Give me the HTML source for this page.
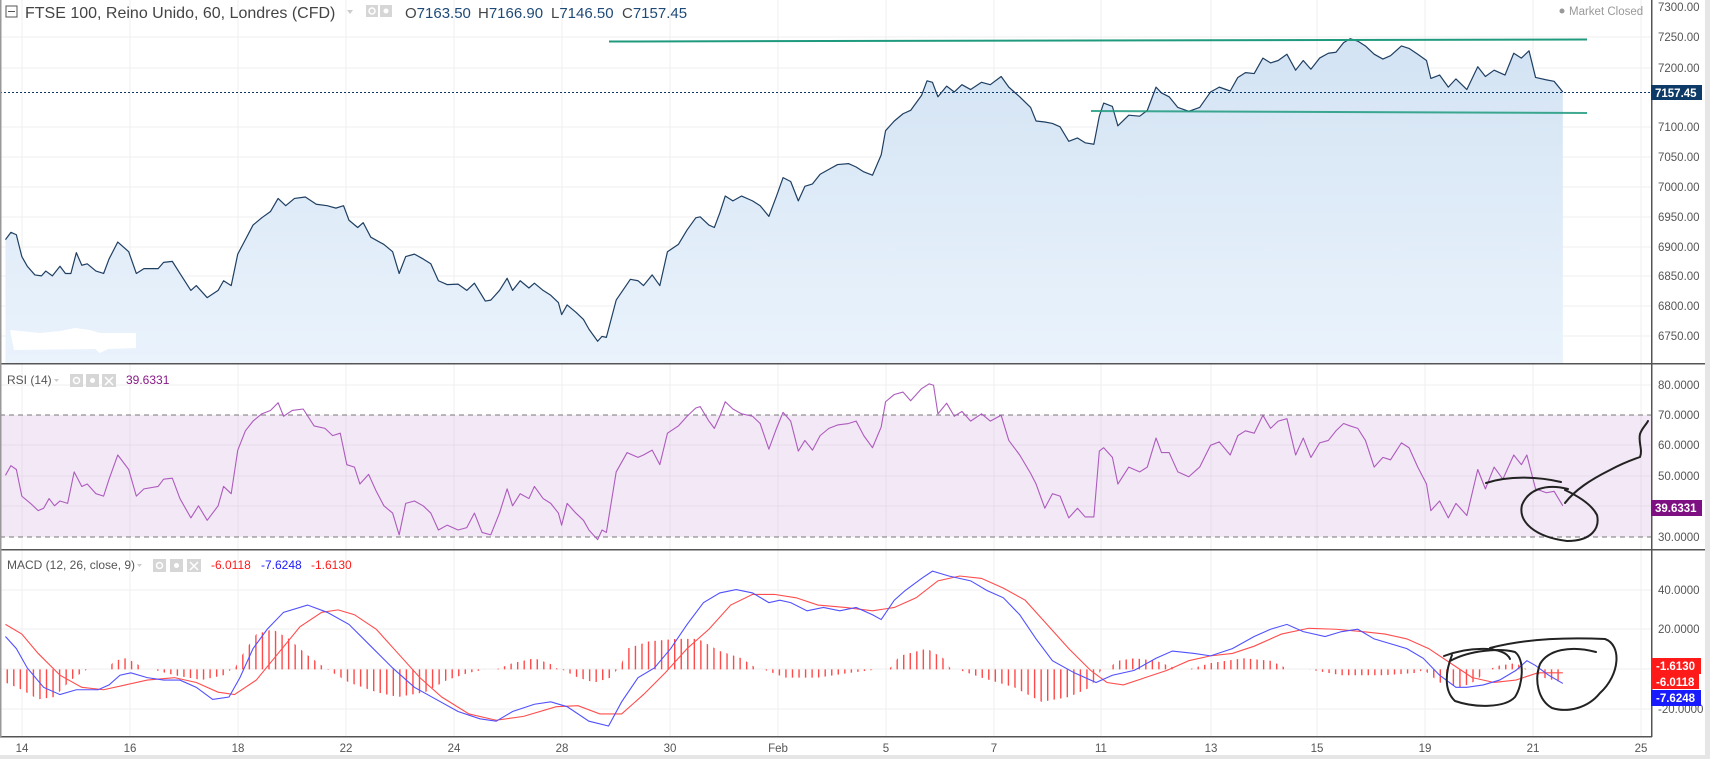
<!DOCTYPE html>
<html><head><meta charset="utf-8"><style>
html,body{margin:0;padding:0;background:#fff;}
svg{display:block;font-family:"Liberation Sans",sans-serif;}
</style></head><body>
<svg width="1710" height="759" viewBox="0 0 1710 759" xmlns="http://www.w3.org/2000/svg">
<defs>
<linearGradient id="pf" x1="0" y1="0" x2="0" y2="1"><stop offset="0" stop-color="#d3e3f3"/><stop offset="1" stop-color="#eaf3fc"/></linearGradient>
<pattern id="hist" patternUnits="userSpaceOnUse" width="6" height="10"><rect x="0" y="0" width="1.3" height="10" fill="#ff4a4a"/></pattern>
</defs>
<rect width="1710" height="759" fill="#fff"/>
<g stroke="#efefef" stroke-width="1">
<line x1="0" y1="37" x2="1652" y2="37"/><line x1="0" y1="68" x2="1652" y2="68"/><line x1="0" y1="127" x2="1652" y2="127"/><line x1="0" y1="157" x2="1652" y2="157"/><line x1="0" y1="187" x2="1652" y2="187"/><line x1="0" y1="217" x2="1652" y2="217"/><line x1="0" y1="247" x2="1652" y2="247"/><line x1="0" y1="276" x2="1652" y2="276"/><line x1="0" y1="306" x2="1652" y2="306"/><line x1="0" y1="336" x2="1652" y2="336"/>
<line x1="0" y1="385" x2="1652" y2="385"/><line x1="0" y1="445" x2="1652" y2="445"/><line x1="0" y1="476" x2="1652" y2="476"/><line x1="0" y1="506" x2="1652" y2="506"/>
<line x1="0" y1="590" x2="1652" y2="590"/><line x1="0" y1="629" x2="1652" y2="629"/><line x1="0" y1="669" x2="1652" y2="669"/><line x1="0" y1="709" x2="1652" y2="709"/>
<line x1="22" y1="0" x2="22" y2="737"/><line x1="130" y1="0" x2="130" y2="737"/><line x1="238" y1="0" x2="238" y2="737"/><line x1="346" y1="0" x2="346" y2="737"/><line x1="454" y1="0" x2="454" y2="737"/><line x1="562" y1="0" x2="562" y2="737"/><line x1="670" y1="0" x2="670" y2="737"/><line x1="778" y1="0" x2="778" y2="737"/><line x1="886" y1="0" x2="886" y2="737"/><line x1="994" y1="0" x2="994" y2="737"/><line x1="1101" y1="0" x2="1101" y2="737"/><line x1="1211" y1="0" x2="1211" y2="737"/><line x1="1317" y1="0" x2="1317" y2="737"/><line x1="1425" y1="0" x2="1425" y2="737"/><line x1="1533" y1="0" x2="1533" y2="737"/><line x1="1641" y1="0" x2="1641" y2="737"/>
</g>
<rect x="0" y="415" width="1652" height="122" fill="#bf7fcf" fill-opacity="0.18"/>
<line x1="0" y1="415" x2="1652" y2="415" stroke="#777" stroke-dasharray="5,4"/>
<line x1="0" y1="537" x2="1652" y2="537" stroke="#777" stroke-dasharray="5,4"/>

<g transform="scale(1.0906 0.48403)">
<path fill="url(#pf)" d="M5,752 L5,495 L10,480 L15,485 L20,530 L25,550 L32,568 L38,570 L42,560 L48,570 L55,550 L60,565 L65,565 L70,522 L75,548 L80,545 L88,560 L95,565 L100,535 L108,500 L118,520 L125,565 L132,555 L145,555 L150,542 L158,540 L165,565 L175,600 L180,590 L190,615 L200,600 L205,580 L212,590 L218,525 L225,495 L232,465 L240,450 L248,437 L255,410 L262,425 L270,410 L280,407 L290,422 L300,425 L308,430 L315,425 L320,455 L328,470 L333,460 L340,490 L352,505 L360,520 L366,565 L372,530 L380,525 L388,535 L395,545 L402,580 L410,588 L420,587 L428,600 L435,585 L445,622 L450,620 L458,600 L465,575 L470,600 L477,580 L485,595 L490,585 L498,600 L505,610 L512,625 L515,650 L520,630 L528,645 L535,660 L540,680 L548,705 L552,695 L556,697 L565,620 L578,577 L585,580 L590,590 L598,568 L605,590 L612,520 L622,505 L630,475 L638,450 L642,448 L650,465 L655,470 L660,440 L665,405 L672,415 L680,405 L690,415 L697,425 L705,447 L712,405 L718,367 L725,375 L732,415 L738,385 L745,380 L752,360 L760,350 L768,340 L778,338 L785,345 L792,355 L800,362 L808,320 L812,270 L820,250 L828,235 L835,228 L845,197 L850,167 L855,170 L860,200 L868,178 L875,190 L882,175 L890,185 L900,170 L908,175 L918,158 L925,180 L935,200 L945,222 L950,250 L958,252 L965,255 L972,262 L980,292 L988,285 L995,295 L1003,298 L1008,240 L1012,213 L1020,220 L1025,260 L1035,238 L1045,240 L1052,228 L1060,180 L1065,192 L1072,200 L1080,222 L1090,230 L1100,222 L1110,190 L1118,180 L1128,188 L1135,160 L1142,150 L1150,152 L1158,120 L1165,130 L1172,125 L1180,112 L1188,145 L1195,125 L1202,143 L1210,120 L1218,110 L1225,108 L1232,88 L1238,80 L1245,85 L1252,95 L1260,112 L1268,122 L1275,115 L1285,95 L1292,100 L1300,112 L1308,125 L1312,162 L1320,155 L1328,180 L1335,163 L1345,185 L1355,138 L1362,158 L1370,145 L1380,155 L1388,110 L1395,120 L1402,105 L1408,160 L1418,165 L1425,168 L1433,190 L1433,752 Z"/>
<path fill="none" stroke="#1f3f62" stroke-width="1.2" vector-effect="non-scaling-stroke" stroke-linejoin="round" d="M5,495 L10,480 L15,485 L20,530 L25,550 L32,568 L38,570 L42,560 L48,570 L55,550 L60,565 L65,565 L70,522 L75,548 L80,545 L88,560 L95,565 L100,535 L108,500 L118,520 L125,565 L132,555 L145,555 L150,542 L158,540 L165,565 L175,600 L180,590 L190,615 L200,600 L205,580 L212,590 L218,525 L225,495 L232,465 L240,450 L248,437 L255,410 L262,425 L270,410 L280,407 L290,422 L300,425 L308,430 L315,425 L320,455 L328,470 L333,460 L340,490 L352,505 L360,520 L366,565 L372,530 L380,525 L388,535 L395,545 L402,580 L410,588 L420,587 L428,600 L435,585 L445,622 L450,620 L458,600 L465,575 L470,600 L477,580 L485,595 L490,585 L498,600 L505,610 L512,625 L515,650 L520,630 L528,645 L535,660 L540,680 L548,705 L552,695 L556,697 L565,620 L578,577 L585,580 L590,590 L598,568 L605,590 L612,520 L622,505 L630,475 L638,450 L642,448 L650,465 L655,470 L660,440 L665,405 L672,415 L680,405 L690,415 L697,425 L705,447 L712,405 L718,367 L725,375 L732,415 L738,385 L745,380 L752,360 L760,350 L768,340 L778,338 L785,345 L792,355 L800,362 L808,320 L812,270 L820,250 L828,235 L835,228 L845,197 L850,167 L855,170 L860,200 L868,178 L875,190 L882,175 L890,185 L900,170 L908,175 L918,158 L925,180 L935,200 L945,222 L950,250 L958,252 L965,255 L972,262 L980,292 L988,285 L995,295 L1003,298 L1008,240 L1012,213 L1020,220 L1025,260 L1035,238 L1045,240 L1052,228 L1060,180 L1065,192 L1072,200 L1080,222 L1090,230 L1100,222 L1110,190 L1118,180 L1128,188 L1135,160 L1142,150 L1150,152 L1158,120 L1165,130 L1172,125 L1180,112 L1188,145 L1195,125 L1202,143 L1210,120 L1218,110 L1225,108 L1232,88 L1238,80 L1245,85 L1252,95 L1260,112 L1268,122 L1275,115 L1285,95 L1292,100 L1300,112 L1308,125 L1312,162 L1320,155 L1328,180 L1335,163 L1345,185 L1355,138 L1362,158 L1370,145 L1380,155 L1388,110 L1395,120 L1402,105 L1408,160 L1418,165 L1425,168 L1433,190"/>
<path fill="none" stroke="#ad5bbd" stroke-width="1.1" vector-effect="non-scaling-stroke" stroke-linejoin="round" d="M5,982 L10,962 L15,970 L20,1025 L28,1040 L35,1055 L40,1050 L45,1030 L50,1045 L55,1035 L62,1040 L68,975 L75,1005 L80,1000 L88,1020 L95,1025 L100,990 L108,940 L118,970 L125,1025 L132,1010 L145,1005 L150,990 L158,988 L165,1030 L175,1070 L182,1045 L190,1075 L200,1045 L205,1005 L212,1020 L218,930 L225,890 L232,870 L240,855 L248,848 L255,832 L260,860 L268,848 L278,845 L288,880 L298,885 L305,900 L312,895 L318,960 L325,965 L330,1000 L338,980 L345,1015 L352,1045 L360,1060 L366,1105 L372,1040 L380,1035 L388,1045 L395,1060 L402,1095 L410,1085 L420,1095 L428,1090 L435,1060 L442,1100 L450,1105 L458,1060 L465,1010 L470,1045 L477,1020 L485,1030 L490,1005 L498,1030 L505,1040 L512,1060 L515,1085 L520,1040 L528,1060 L535,1075 L540,1095 L548,1115 L552,1095 L556,1100 L565,975 L575,935 L585,945 L590,940 L598,930 L605,960 L612,895 L622,880 L630,860 L638,843 L642,840 L650,870 L655,885 L660,860 L665,830 L672,845 L680,855 L690,860 L697,875 L705,928 L712,885 L718,852 L725,870 L732,932 L738,910 L745,930 L752,900 L760,885 L768,878 L778,875 L785,870 L792,900 L800,925 L808,882 L812,830 L820,815 L828,810 L835,828 L845,803 L852,793 L856,796 L860,855 L868,833 L875,860 L882,850 L890,870 L900,855 L908,870 L918,858 L925,910 L935,940 L945,978 L950,1000 L958,1050 L965,1020 L972,1025 L980,1070 L988,1050 L995,1068 L1003,1068 L1008,932 L1012,925 L1020,945 L1025,1000 L1035,965 L1045,975 L1052,965 L1060,905 L1065,935 L1072,935 L1080,975 L1090,985 L1100,965 L1110,920 L1118,913 L1128,940 L1135,900 L1142,890 L1150,895 L1158,858 L1165,885 L1172,870 L1180,865 L1188,940 L1195,905 L1202,945 L1210,915 L1218,910 L1225,890 L1232,875 L1238,880 L1245,885 L1252,910 L1260,965 L1268,945 L1275,950 L1285,915 L1292,925 L1300,965 L1308,1000 L1312,1055 L1320,1035 L1328,1070 L1335,1040 L1345,1065 L1355,970 L1362,1010 L1370,965 L1378,990 L1388,940 L1395,960 L1400,940 L1408,1010 L1418,1018 L1425,1015 L1433,1045"/>
<g fill="url(#hist)">
<path d="M5,1383 L5,1410 L20,1425 L35,1445 L50,1440 L65,1405 L75,1390 L80,1383 Z"/>
<path d="M98,1383 L105,1365 L115,1360 L125,1370 L132,1383 Z"/>
<path d="M140,1383 L160,1395 L185,1405 L205,1395 L212,1383 Z"/>
<path d="M215,1383 L220,1360 L235,1310 L250,1300 L265,1320 L280,1350 L295,1375 L300,1383 Z"/>
<path d="M300,1383 L320,1410 L345,1430 L365,1440 L390,1430 L410,1405 L430,1390 L445,1383 Z"/>
<path d="M455,1383 L470,1370 L490,1360 L505,1372 L512,1383 Z"/>
<path d="M515,1383 L530,1400 L545,1410 L560,1400 L566,1383 Z"/>
<path d="M568,1383 L575,1340 L595,1325 L620,1320 L640,1320 L660,1345 L680,1360 L695,1383 Z"/>
<path d="M700,1383 L720,1400 L750,1400 L780,1390 L805,1383 Z"/>
<path d="M815,1383 L825,1355 L850,1340 L865,1360 L872,1383 Z"/>
<path d="M878,1383 L900,1400 L930,1420 L955,1450 L980,1440 L1000,1420 L1010,1383 Z"/>
<path d="M1015,1383 L1025,1365 L1040,1360 L1060,1365 L1080,1383 Z"/>
<path d="M1090,1383 L1110,1370 L1140,1360 L1165,1365 L1182,1383 Z"/>
<path d="M1200,1383 L1230,1395 L1270,1395 L1300,1390 L1305,1383 Z"/>
<path d="M1305,1383 L1320,1410 L1340,1420 L1355,1405 L1362,1383 Z"/>
<path d="M1365,1383 L1375,1375 L1390,1370 L1400,1383 Z"/>
<path d="M1405,1383 L1415,1400 L1433,1410 L1433,1383 Z"/>
</g>
<path fill="none" stroke="#ff4d4d" stroke-width="1.1" vector-effect="non-scaling-stroke" d="M5,1290 L20,1310 L35,1350 L55,1395 L75,1420 L95,1425 L115,1415 L135,1405 L160,1400 L180,1410 L200,1430 L215,1435 L235,1405 L255,1350 L275,1295 L295,1265 L310,1260 L325,1270 L345,1300 L365,1350 L385,1400 L405,1440 L430,1475 L455,1488 L480,1480 L510,1460 L530,1458 L550,1475 L570,1475 L590,1435 L610,1390 L630,1340 L650,1300 L670,1250 L690,1228 L710,1228 L730,1235 L750,1250 L775,1255 L800,1262 L820,1255 L840,1235 L860,1200 L880,1190 L900,1195 L920,1215 L940,1240 L960,1290 L980,1340 L1000,1385 L1015,1410 L1030,1415 L1050,1400 L1070,1385 L1090,1365 L1110,1355 L1130,1350 L1150,1335 L1175,1310 L1200,1298 L1225,1300 L1250,1305 L1270,1310 L1290,1320 L1310,1340 L1330,1370 L1350,1400 L1370,1410 L1390,1405 L1410,1390 L1433,1390"/>
<path fill="none" stroke="#5050ff" stroke-width="1.1" vector-effect="non-scaling-stroke" d="M5,1315 L15,1340 L25,1380 L40,1420 L55,1435 L70,1425 L90,1425 L100,1415 L110,1395 L120,1390 L135,1400 L150,1405 L165,1405 L180,1420 L195,1445 L210,1440 L220,1400 L232,1340 L245,1300 L260,1265 L282,1250 L300,1265 L320,1290 L340,1335 L360,1380 L380,1420 L400,1445 L420,1470 L440,1485 L455,1490 L470,1470 L490,1455 L505,1450 L520,1460 L540,1490 L558,1500 L570,1450 L585,1400 L600,1380 L615,1340 L630,1290 L645,1245 L660,1225 L675,1218 L690,1225 L705,1245 L715,1240 L725,1245 L740,1262 L755,1255 L770,1262 L785,1255 L800,1270 L808,1280 L820,1240 L830,1220 L845,1195 L855,1180 L870,1190 L890,1200 L905,1220 L920,1235 L935,1270 L950,1320 L965,1365 L985,1390 L1005,1410 L1020,1395 L1040,1385 L1060,1360 L1075,1345 L1095,1350 L1110,1355 L1130,1340 L1150,1315 L1165,1300 L1180,1290 L1195,1305 L1215,1315 L1230,1305 L1245,1300 L1260,1320 L1275,1330 L1290,1340 L1305,1360 L1320,1395 L1335,1420 L1345,1420 L1360,1415 L1375,1405 L1390,1385 L1400,1365 L1408,1375 L1420,1395 L1433,1412"/>
</g>

<path fill="#fff" d="M10,330 L40,333 L60,331 L75,328 L90,330 L100,333 L136,333 L136,348 L108,349 L100,353 L95,349 L14,350 Z"/>

<line x1="609" y1="41.5" x2="1587" y2="39.5" stroke="#1f9a7e" stroke-width="2"/>
<line x1="1091" y1="111" x2="1587" y2="113" stroke="#1f9a7e" stroke-width="2" stroke-opacity="0.85"/>
<line x1="0" y1="92.5" x2="1652" y2="92.5" stroke="#0d3a6a" stroke-dasharray="2,2"/>

<g fill="none" stroke="#222" stroke-width="2" stroke-linecap="round" stroke-linejoin="round">
<path d="M1486,483 C1510,475 1540,477 1561,482"/>
<path d="M1568,489 C1545,483 1528,490 1522,505 C1518,522 1535,537 1567,541 C1592,541 1600,528 1597,515 C1592,505 1580,497 1565,490"/>
<path d="M1565,503 C1575,490 1590,480 1610,470 C1625,462 1632,460 1640,457 C1643,450 1638,442 1640,434 C1642,428 1646,425 1648,421"/>
<path d="M1444,656 C1470,646 1505,646 1510,659"/>
<path d="M1450,661 C1470,650 1500,648 1515,652 C1525,660 1523,685 1515,697 C1505,708 1475,708 1455,701 C1443,690 1446,670 1452,655"/>
<path d="M1490,648 C1520,640 1560,637 1605,639 C1622,645 1620,675 1600,693 C1588,708 1568,713 1552,708 C1538,700 1534,680 1540,664 C1548,650 1570,645 1596,652"/>
</g>

<rect x="0" y="363" width="1710" height="1.5" fill="#555"/>
<rect x="0" y="549" width="1710" height="1.5" fill="#555"/>
<rect x="1651" y="0" width="1.5" height="737" fill="#555"/>
<rect x="0" y="736" width="1652" height="1.5" fill="#555"/>
<rect x="0" y="0" width="1.5" height="737" fill="#999"/>
<rect x="1705" y="0" width="5" height="759" fill="#e6e6e6"/>
<rect x="0" y="755" width="1710" height="4" fill="#e6e6e6"/>

<g font-size="11.5" fill="#555">
<text x="1658" y="11">7300.00</text><text x="1658" y="41">7250.00</text><text x="1658" y="72">7200.00</text><text x="1658" y="131">7100.00</text><text x="1658" y="161">7050.00</text><text x="1658" y="191">7000.00</text><text x="1658" y="221">6950.00</text><text x="1658" y="251">6900.00</text><text x="1658" y="280">6850.00</text><text x="1658" y="310">6800.00</text><text x="1658" y="340">6750.00</text>
<text x="1658" y="389">80.0000</text><text x="1658" y="419">70.0000</text><text x="1658" y="449">60.0000</text><text x="1658" y="480">50.0000</text><text x="1658" y="541">30.0000</text>
<text x="1658" y="594">40.0000</text><text x="1658" y="633">20.0000</text><text x="1658" y="713">-20.0000</text>
</g>
<rect x="1651" y="85" width="51" height="15" fill="#0d3a66"/>
<text x="1655" y="97" font-size="11.5" font-weight="bold" fill="#fff">7157.45</text>
<rect x="1651" y="500" width="51" height="16" fill="#7e1083"/>
<text x="1655" y="512" font-size="11.5" font-weight="bold" fill="#fff">39.6331</text>
<rect x="1651" y="658" width="50" height="16" fill="#ff1a1a"/>
<text x="1656" y="670" font-size="11.5" font-weight="bold" fill="#fff">-1.6130</text>
<rect x="1651" y="674" width="48" height="15" fill="#ff1a1a"/>
<text x="1656" y="686" font-size="11.5" font-weight="bold" fill="#fff">-6.0118</text>
<rect x="1651" y="690" width="50" height="16" fill="#1a1aff"/>
<text x="1656" y="702" font-size="11.5" font-weight="bold" fill="#fff">-7.6248</text>

<g font-size="11.5" fill="#555" text-anchor="middle">
<text x="22" y="752">14</text><text x="130" y="752">16</text><text x="238" y="752">18</text><text x="346" y="752">22</text><text x="454" y="752">24</text><text x="562" y="752">28</text><text x="670" y="752">30</text><text x="778" y="752">Feb</text><text x="886" y="752">5</text><text x="994" y="752">7</text><text x="1101" y="752">11</text><text x="1211" y="752">13</text><text x="1317" y="752">15</text><text x="1425" y="752">19</text><text x="1533" y="752">21</text><text x="1641" y="752">25</text>
</g>

<rect x="6" y="6" width="11" height="11" fill="none" stroke="#555"/><line x1="8" y1="11.5" x2="15" y2="11.5" stroke="#555"/>
<text x="25" y="18" font-size="16" fill="#444">FTSE 100, Reino Unido, 60, Londres (CFD)</text>
<path d="M347,10 L353,10 L350,14 Z" fill="#ccc"/>
<rect x="366" y="5" width="12" height="12" fill="#d6d6d6"/><circle cx="372" cy="11" r="3" fill="none" stroke="#fff" stroke-width="1.5"/>
<rect x="380" y="5" width="12" height="12" fill="#d6d6d6"/><circle cx="386" cy="11" r="2.5" fill="#fff"/>
<g font-size="15"><text x="405" y="18" fill="#444">O<tspan fill="#1f4a78">7163.50</tspan></text>
<text x="478" y="18" fill="#444">H<tspan fill="#1f4a78">7166.90</tspan></text>
<text x="551" y="18" fill="#444">L<tspan fill="#1f4a78">7146.50</tspan></text>
<text x="622" y="18" fill="#444">C<tspan fill="#1f4a78">7157.45</tspan></text></g>
<circle cx="1562" cy="11" r="2.5" fill="#999"/>
<text x="1569" y="15" font-size="11.5" fill="#999">Market Closed</text>

<text x="7" y="384" font-size="12" fill="#555">RSI (14)</text>
<path d="M54,379 L59,379 L56.5,382 Z" fill="#ccc"/>
<rect x="70" y="374" width="13" height="13" fill="#d6d6d6"/><circle cx="76.5" cy="380.5" r="3" fill="none" stroke="#fff" stroke-width="1.5"/>
<rect x="86" y="374" width="13" height="13" fill="#d6d6d6"/><circle cx="92.5" cy="380.5" r="2.5" fill="#fff"/>
<rect x="102" y="374" width="14" height="13" fill="#d6d6d6"/><path d="M105,377 L113,385 M113,377 L105,385" stroke="#fff" stroke-width="1.5"/>
<text x="126" y="384" font-size="12" fill="#8a1a8a">39.6331</text>

<text x="7" y="569" font-size="12" fill="#555">MACD (12, 26, close, 9)</text>
<path d="M137,564 L142,564 L139.5,567 Z" fill="#ccc"/>
<rect x="153" y="559" width="13" height="13" fill="#d6d6d6"/><circle cx="159.5" cy="565.5" r="3" fill="none" stroke="#fff" stroke-width="1.5"/>
<rect x="170" y="559" width="13" height="13" fill="#d6d6d6"/><circle cx="176.5" cy="565.5" r="2.5" fill="#fff"/>
<rect x="187" y="559" width="14" height="13" fill="#d6d6d6"/><path d="M190,562 L198,570 M198,562 L190,570" stroke="#fff" stroke-width="1.5"/>
<text x="211" y="569" font-size="12" fill="#ff1a1a">-6.0118</text>
<text x="261" y="569" font-size="12" fill="#1a1aff">-7.6248</text>
<text x="311" y="569" font-size="12" fill="#ff1a1a">-1.6130</text>
</svg>
</body></html>
